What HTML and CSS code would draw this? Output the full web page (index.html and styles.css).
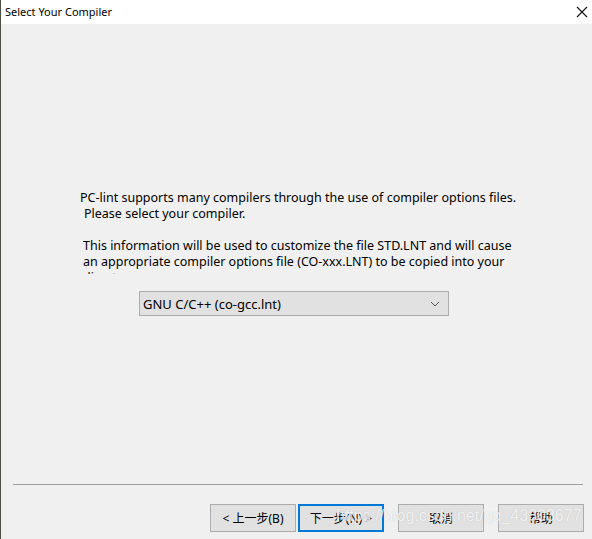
FILE: index.html
```html
<!DOCTYPE html>
<html lang="zh-CN">
<head>
  <meta charset="UTF-8">
  <title>Select Your Compiler</title>
  <link rel="stylesheet" href="styles.css">
</head>
<body>
  <div class="window">
    <div class="titlebar">
      <span class="title">Select Your Compiler</span>
      <svg class="close" width="12" height="12" viewBox="0 0 12 12">
        <path d="M1 1 L11 11 M11 1 L1 11" stroke="#111" stroke-width="1.1" fill="none"/>
      </svg>
    </div>

    <div class="content">
      <div class="message">
        <div class="line">PC-lint supports many compilers through the use of compiler options files.</div>
        <div class="line indent">Please select your compiler.</div>
        <div class="line">&nbsp;</div>
        <div class="line indent-small">This information will be used to customize the file STD.LNT and will cause</div>
        <div class="line indent-small">an appropriate compiler options file (CO-xxx.LNT) to be copied into your</div>
        <div class="line indent-small">directory.</div>
      </div>

      <div class="combo">
        <span>GNU C/C++ (co-gcc.lnt)</span>
        <svg class="chevron" width="10" height="6" viewBox="0 0 10 6">
          <path d="M1 1 L5 5 L9 1" stroke="#555" stroke-width="1" fill="none"/>
        </svg>
      </div>

      <div class="spacer"></div>
      <div class="separator"></div>

      <div class="buttons">
        <button class="btn">&lt; 上一步(B)</button>
        <button class="btn default">下一步(N) &gt;</button>
        <button class="btn wide-gap">取消</button>
        <button class="btn wide-gap">帮助</button>
      </div>

      <div class="watermark">https://blog.csdn.net/qq_43803677</div>
    </div>
  </div>
</body>
</html>
```

FILE: styles.css
```css
html, body {
  margin: 0;
  padding: 0;
}

body {
  font-family: "Noto Sans", "Noto Sans CJK SC", sans-serif;
  font-size: 12px;
  color: #000;
  background: #f0f0f0;
}

.window {
  position: relative;
  width: 591px;
  height: 539px;
  border-left: 1px solid #4a4f48;
  display: flex;
  flex-direction: column;
  overflow: hidden;
}

.titlebar {
  height: 24px;
  background: #fff;
  display: flex;
  align-items: center;
  justify-content: space-between;
  padding: 0 4px 0 4px;
}

.title {
  font-size: 11px;
  line-height: 24px;
}

.content {
  flex: 1;
  display: flex;
  flex-direction: column;
  background: #f0f0f0;
}

.message {
  margin-top: 166px;
  margin-left: 79px;
  width: 460px;
  height: 84px;
  overflow: hidden;
  font-size: 12.5px;
  line-height: 16px;
}

.line {
  white-space: nowrap;
}

.indent {
  padding-left: 4px;
}

.indent-small {
  padding-left: 3px;
}

.combo {
  margin-top: 17px;
  margin-left: 138px;
  width: 297px;
  height: 23px;
  border: 1px solid #adadad;
  background: #e1e1e1;
  display: flex;
  align-items: center;
  justify-content: space-between;
  padding: 0 8px 0 3px;
  font-size: 13px;
}

.chevron {
  display: block;
}

.spacer {
  flex: 1;
}

.separator {
  margin-left: 12px;
  width: 570px;
  height: 1px;
  background: #a0a0a0;
}

.buttons {
  display: flex;
  justify-content: flex-end;
  margin-top: 19px;
  margin-bottom: 7px;
  padding-right: 8px;
}

.btn {
  font-family: "Noto Sans", "Noto Sans CJK SC", sans-serif;
  font-size: 12px;
  width: 86px;
  height: 28px;
  margin: 0 0 0 2px;
  padding: 0;
  border: 1px solid #adadad;
  background: #e1e1e1;
  color: #000;
}

.btn.default {
  border: 2px solid #0078d7;
}

.btn.wide-gap {
  margin-left: 14px;
}

.watermark {
  position: absolute;
  left: 335px;
  top: 507px;
  font-family: "Liberation Sans", Arial, sans-serif;
  font-size: 16px;
  color: rgba(255, 255, 255, 0.8);
  text-shadow: 0 0 1px rgba(110, 110, 110, 0.35);
  white-space: nowrap;
  pointer-events: none;
}
```
